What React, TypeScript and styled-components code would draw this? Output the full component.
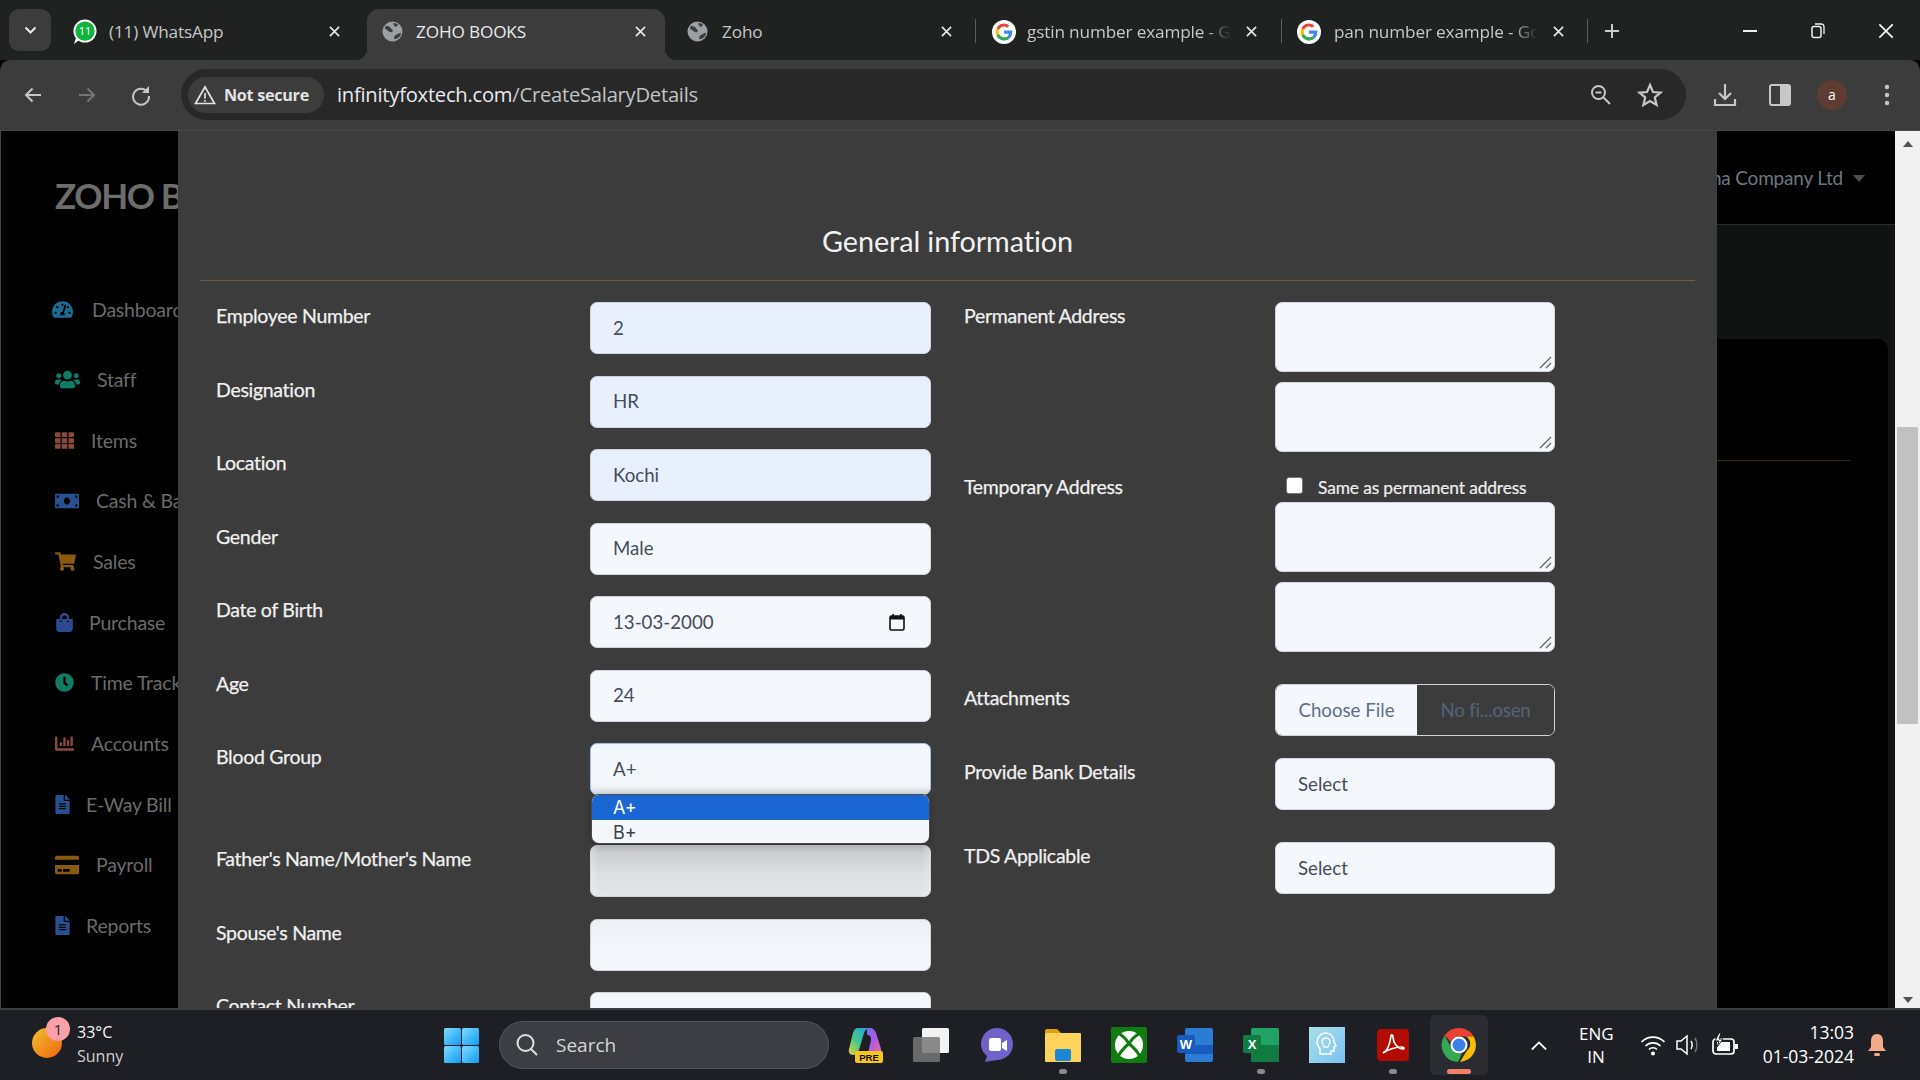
import React from 'react';
import styled, { createGlobalStyle } from 'styled-components';
import {
  FaTachometerAlt, FaUsers, FaTh, FaMoneyBill, FaShoppingCart, FaShoppingBag, FaClock,
  FaChartBar, FaFileAlt, FaCreditCard,
} from 'react-icons/fa';

const Global = createGlobalStyle`
  html, body { margin: 0; padding: 0; width: 1920px; height: 1080px; overflow: hidden; background: #000; }
  * { box-sizing: border-box; }
`;

const Screen = styled.div`
  width: 1920px; height: 1080px; display: flex; flex-direction: column;
  font-family: Lato, "Liberation Sans", sans-serif; overflow: hidden;
`;

/* ---------- tab strip ---------- */
const TabStrip = styled.div`
  height: 60px; background: #202222; display: flex; align-items: flex-end; padding-left: 9px; flex: none;
  font-family: "Open Sans", "Noto Sans", sans-serif;
`;
const TabMenu = styled.div`
  width: 42px; height: 42px; margin-bottom: 9px; border-radius: 10px; background: #3c3c3c;
  display: flex; align-items: center; justify-content: center; flex: none;
`;
const Tab = styled.div<{ $w: number; $pl: number; $active?: boolean }>`
  width: ${p => p.$w}px; height: 51px; display: flex; align-items: center; flex: none; position: relative;
  padding: 0 0 6px ${p => p.$pl}px; color: ${p => (p.$active ? '#e8eaed' : '#c4c7c5')};
  background: ${p => (p.$active ? '#3c3c3c' : 'transparent')};
  border-radius: ${p => (p.$active ? '12px 12px 0 0' : '0')};
  ${p => p.$active ? `
    &::before, &::after { content: ''; position: absolute; bottom: 0; width: 12px; height: 12px; }
    &::before { left: -12px; background: radial-gradient(circle at 0 0, transparent 12px, #3c3c3c 12.5px); }
    &::after { right: -12px; background: radial-gradient(circle at 100% 0, transparent 12px, #3c3c3c 12.5px); }
  ` : ''}
`;
const TabTitle = styled.span<{ $ml?: number; $fade?: boolean }>`
  font-size: 17.2px; margin-left: ${p => p.$ml ?? 12}px; white-space: nowrap; overflow: hidden; flex: 1; letter-spacing: -0.15px;
  ${p => p.$fade ? 'margin-right: 7px; -webkit-mask-image: linear-gradient(to right, #000 88%, transparent 100%);' : ''}
`;
const TabClose = styled.span<{ $mr: number }>`
  width: 26px; height: 26px; display: flex; align-items: center; justify-content: center; flex: none;
  margin-right: ${p => p.$mr}px;
`;
const TabSep = styled.span`
  width: 1px; height: 24px; background: #5c5e5e; flex: none; margin-bottom: 17px;
`;
const NewTab = styled.span`
  margin: 0 0 21px 16px; display: flex; flex: none;
`;
const WinBtns = styled.div`
  margin-left: auto; display: flex; height: 50px; align-self: flex-start; align-items: center; margin-top: 6px;
`;
const WinBtn = styled.span`
  width: 68px; height: 50px; display: flex; align-items: center; justify-content: center;
`;
const FaviconG = styled.svg`
  background: #fff; border-radius: 50%; padding: 3px; flex: none;
`;
const FaviconFlat = styled.svg`
  flex: none;
`;

/* ---------- toolbar ---------- */
const Toolbar = styled.div`
  height: 71px; flex: none; background: #3c3c3c; border-radius: 10px 10px 0 0; display: flex; align-items: center;
  padding: 0 0 1px 15px; border-bottom: 1px solid #484848;
`;
const NavIcon = styled.span<{ $ml?: number }>`
  width: 36px; height: 36px; display: flex; align-items: center; justify-content: center; flex: none;
  margin-left: ${p => p.$ml ?? 0}px;
`;
const Omnibox = styled.div`
  margin-left: 22px; width: 1505px; height: 51px; border-radius: 26px; background: #282828; display: flex; align-items: center;
  padding: 0 23px 0 7px; flex: none; font-family: "Open Sans", "Noto Sans", sans-serif;
`;
const Security = styled.div`
  height: 36px; width: 136px; border-radius: 18px; background: #3c3c3c; display: flex; align-items: center; gap: 8px;
  padding-left: 6px; color: #e3e3e3; font-size: 16.2px; font-weight: 700; white-space: nowrap; letter-spacing: -0.3px; flex: none;
`;
const Url = styled.div`
  margin-left: 13px; font-size: 20.2px; color: #e8eaed; white-space: nowrap; letter-spacing: -0.25px; flex: 1; padding-bottom: 2px;
`;
const UrlDim = styled.span`
  color: #c0c2c4;
`;
const Avatar = styled.span`
  width: 30px; height: 30px; border-radius: 50%; background: #5f3c32; color: #fff; font-size: 14px; display: flex;
  align-items: center; justify-content: center; font-family: "Open Sans", sans-serif;
`;
const OmniEnd = styled.div`
  display: flex; align-items: center; gap: 24px; flex: none;
`;

/* ---------- page ---------- */
const PageArea = styled.div`
  flex: 1; display: flex; position: relative; min-height: 0; border-left: 1px solid #444; background: #000;
`;
const Sidebar = styled.div`
  width: 260px; flex: none; background: #000; padding-left: 54px;
`;
const Logo = styled.div`
  margin-top: 44px; font-size: 35px; font-weight: 700; color: #6d6d6d; letter-spacing: -1.4px; white-space: nowrap; line-height: 40px;
`;
const NavList = styled.div`
  margin-top: 64px; display: flex; flex-direction: column;
`;
const NavItem = styled.div<{ $c: string; $gap: number; $ml?: number; $first?: boolean }>`
  height: 60.7px; display: flex; align-items: center; color: #6a6a6a; font-size: 19.5px; white-space: nowrap;
  gap: ${p => p.$gap}px; margin-left: ${p => p.$ml ?? 0}px; letter-spacing: -0.2px;
  margin-bottom: ${p => (p.$first ? '9.3px' : '0')};
  svg { color: ${p => p.$c}; flex: none; }
`;
const NavFile = styled(FaFileAlt)`
  width: 15px; height: 19px;
`;
const Main = styled.div`
  flex: 1; display: flex; flex-direction: column; background: #111212; min-width: 0;
`;
const TopBar = styled.div`
  height: 94px; background: #000; flex: none; border-bottom: 1px solid #2b2b2b; display: flex; align-items: center;
  justify-content: flex-end; padding-right: 30px; color: #6d7780; font-size: 19px; gap: 10px; padding-bottom: 1px; letter-spacing: -0.2px;
`;
const Caret = styled.span`
  width: 0; height: 0; border-left: 6px solid transparent; border-right: 6px solid transparent; border-top: 7px solid #4e4e4e; margin-top: 2px;
`;
const BackCard = styled.div`
  margin: 114px 7px 0 0; flex: 1; background: #000; border-radius: 10px 10px 0 0; position: relative;
`;
const BackRule = styled.div`
  position: absolute; right: 38px; top: 121px; width: 400px; height: 1px; background: #33291b;
`;
const Scrollbar = styled.div`
  width: 25px; flex: none; background: #f1f1f1; display: flex; flex-direction: column; align-items: center; padding-top: 10px; position: relative;
`;
const ScrollThumb = styled.div`
  width: 21px; height: 297px; background: #c1c1c1; margin-top: 280px; flex: none;
`;
const ArrowUp = styled.span`
  width: 0; height: 0; border-left: 5.5px solid transparent; border-right: 5.5px solid transparent; border-bottom: 6px solid #505050; flex: none;
`;
const ArrowDown = styled.span`
  position: absolute; bottom: 5px; width: 0; height: 0; border-left: 5.5px solid transparent; border-right: 5.5px solid transparent; border-top: 6px solid #505050;
`;

/* ---------- modal ---------- */
const Modal = styled.div`
  position: absolute; left: 177px; top: 0; bottom: 0; width: 1539px; background: #3c3c3c; overflow: hidden; padding: 0 22px;
`;
const ModalTitle = styled.h2`
  margin: 0; height: 150px; padding-top: 90px; text-align: center; color: #f1f1f1; font-size: 28.8px; font-weight: 400; line-height: 40px; letter-spacing: -0.1px;
  border-bottom: 1px solid #6f5b3a;
`;
const Columns = styled.div`
  display: flex; padding-top: 21px;
`;
const LeftCol = styled.div`
  width: 761px; flex: none; padding-left: 16px; display: flex; flex-direction: column;
`;
const RightCol = styled.div`
  flex: 1; padding-left: 3px; display: flex; flex-direction: column;
`;
const Row = styled.div<{ $mb?: number }>`
  display: flex; align-items: flex-start; margin-bottom: ${p => p.$mb ?? 21.5}px; position: relative; flex: none;
`;
const Label = styled.div<{ $w: number; $top?: number }>`
  width: ${p => p.$w}px; flex: none; color: #f0f0f0; font-size: 19.5px; font-weight: 400; padding-top: ${p => p.$top ?? 2}px; line-height: 24px;
  letter-spacing: -0.3px; -webkit-text-stroke: 0.25px #f0f0f0; white-space: nowrap;
`;
const Field = styled.div<{ $w?: number; $fill?: string; $focus?: boolean }>`
  width: ${p => p.$w ?? 341}px; height: 52px; border-radius: 7px; background: ${p => p.$fill ?? '#f4f8fd'};
  border: 1px solid ${p => (p.$focus ? '#a6bde8' : '#d0d3da')}; display: flex; align-items: center; justify-content: space-between;
  padding: 0 22px 1px; color: #454c5a; font-size: 18.7px; flex: none;
  ${p => p.$focus ? 'box-shadow: inset 0 -12px 10px -10px rgba(0,0,0,.18);' : ''}
`;
const FieldShaded = styled(Field)`
  background: linear-gradient(#c6c8cb, #dcdee1 55%, #e3e5e8);
  box-shadow: inset 10px 0 10px -8px rgba(255,255,255,.35), inset -10px 0 10px -8px rgba(255,255,255,.35);
`;
const FieldFaint = styled(Field)`
  background: linear-gradient(#eceff3, #f4f8fd 70%);
`;
const CalIcon = styled.svg`
  margin-right: 3px; flex: none;
`;
const SelectWrap = styled.div`
  position: relative; flex: none;
`;
const DropdownPop = styled.div`
  position: absolute; left: 2px; top: 52px; width: 337px; height: 48px; border-radius: 7px; overflow: hidden; z-index: 3;
  background: #f4f8fd; box-shadow: 0 0 0 1px #4b4b4b, 0 2px 8px rgba(0,0,0,.3); font-family: Inter, "Liberation Sans", sans-serif;
`;
const DropOption = styled.div<{ $sel?: boolean }>`
  height: ${p => (p.$sel ? 25 : 23)}px; line-height: 25px; padding-left: 21px; font-size: 18px;
  background: ${p => (p.$sel ? '#1a67d4' : 'transparent')}; color: ${p => (p.$sel ? '#fff' : '#38404e')};
`;
const AreaStack = styled.div`
  display: flex; flex-direction: column; gap: 10px;
`;
const TempBlock = styled.div`
  display: flex; flex-direction: column; padding-top: 20px;
`;
const TextArea = styled.div`
  width: 280px; height: 70px; border-radius: 7px; background: #f4f8fd; border: 1px solid #d0d3da; position: relative; flex: none;
`;
const Grip = styled.svg`
  position: absolute; right: 2px; bottom: 2px;
`;
const CheckRow = styled.div`
  height: 30px; display: flex; align-items: center; padding-left: 11px; color: #eee; font-size: 17.4px; letter-spacing: -0.15px;
  -webkit-text-stroke: 0.2px #eee; white-space: nowrap;
`;
const CheckBox = styled.span`
  width: 17px; height: 17px; background: #fff; border: 1px solid #767676; border-radius: 3px; margin: -3px 15px 0 0; flex: none;
`;
const FileField = styled.div`
  width: 280px; height: 52px; border-radius: 7px; border: 1px solid #d0d3da; display: flex; overflow: hidden; flex: none; font-size: 18.7px;
`;
const FileBtn = styled.div`
  width: 141px; background: #f4f8fd; color: #5f6f88; display: flex; align-items: center; justify-content: center; flex: none;
`;
const FileName = styled.div`
  flex: 1; background: #3c3c3c; color: #55637c; display: flex; align-items: center; justify-content: center; letter-spacing: -0.2px;
`;

/* ---------- taskbar ---------- */
const Taskbar = styled.div`
  height: 72px; flex: none; background: #1e1f24; border-top: 2px solid #3a3b40; display: flex; align-items: center;
  font-family: "Open Sans", "Noto Sans", sans-serif; color: #fff;
`;
const Weather = styled.div`
  width: 444px; padding-left: 32px; display: flex; align-items: center; flex: none; gap: 15px;
`;
const WeatherIcon = styled.div`
  width: 30px; height: 30px; border-radius: 50%; background: linear-gradient(135deg, #f1c02e, #f0640f); position: relative; flex: none; margin-top: -4px;
`;
const WeatherBadge = styled.span`
  position: absolute; top: -11px; left: 14px; width: 24px; height: 24px; border-radius: 50%; background: #f9a0a8; color: #222; font-size: 15px;
  display: flex; align-items: center; justify-content: center;
`;
const WeatherText = styled.div`
  font-size: 16px; line-height: 24px; color: #f4f4f4; margin-top: -2px;
`;
const WeatherSub = styled.div`
  color: #cfcfcf;
`;
const StartIcon = styled.svg`
  flex: none;
`;
const SearchBox = styled.div`
  width: 330px; height: 48px; border-radius: 24px; background: #3d3e44; border: 1px solid #55565b; margin: 0 3px 0 20px; display: flex;
  align-items: center; padding-left: 15px; gap: 17px; font-size: 19px; color: #d6d6d6; flex: none;
`;
const TaskIcons = styled.div`
  display: flex; align-items: center; flex: none;
`;
const TaskIcon = styled.div<{ $active?: boolean }>`
  width: 66px; height: 60px; display: flex; align-items: center; justify-content: center; position: relative; flex: none;
  &::before { content: ''; position: absolute; left: 4px; right: 4px; top: 0; bottom: 0; border-radius: 6px; ${p => p.$active ? 'background: #2b2c32;' : ''} }
  svg { position: relative; }
`;
const Pip = styled.span<{ $c?: string; $w?: number }>`
  position: absolute; bottom: 1px; left: 50%; transform: translateX(-50%); width: ${p => p.$w ?? 8}px; height: 5px; border-radius: 3px; background: ${p => p.$c ?? '#8a8a8e'};
`;
const Tray = styled.div`
  margin-left: 39px; display: flex; align-items: center; flex: none;
`;
const TrayGlyph = styled.svg<{ $ml?: number }>`
  margin-left: ${p => p.$ml ?? 0}px; flex: none;
`;
const Lang = styled.div`
  font-size: 17px; line-height: 23px; text-align: center; margin-left: 32px; width: 34px; flex: none;
`;
const Clock = styled.div`
  font-size: 17.5px; line-height: 24px; text-align: right; margin: -2px 0 0 23px; width: 92px; white-space: nowrap; flex: none;
  display: flex; flex-direction: column; align-items: flex-end;
`;

const G = () => (
  <FaviconG width="24" height="24" viewBox="0 0 48 48">
    <path fill="#EA4335" d="M24 9.5c3.9 0 6.6 1.7 8.2 3.1l6-5.9C34.5 3.3 29.7 1 24 1 15.1 1 7.5 6.1 3.8 13.5l7 5.4C12.6 13.4 17.8 9.5 24 9.5z" />
    <path fill="#4285F4" d="M46.900 24.5c0-1.7-.1-3-.4-4.3H24v8.4h13.1c-.3 2.1-1.7 5.2-4.8 7.3l7 5.4c4.2-3.9 6.6-9.5 6.6-16.8z" />
    <path fill="#FBBC05" d="M10.800 28.7c-.5-1.4-.7-3-.7-4.7s.3-3.2.7-4.7l-7-5.4C2.3 16.9 1.5 20.4 1.5 24s.8 7.1 2.3 10.1z" />
    <path fill="#34A853" d="M24 47c6.2 0 11.4-2 15.300-5.6l-7-5.4c-2 1.4-4.7 2.3-8.300 2.3-6.200 0-11.400-4-13.200-9.600l-7 5.4C7.500 41.900 15.100 47 24 47z" />
  </FaviconG>
);
const Globe = () => (
  <FaviconFlat width="21" height="21" viewBox="0 0 22 22">
    <circle cx="11" cy="11" r="10.5" fill="#9aa0a6" />
    <path d="M4 5c2 1 4 0 5 2s3 2 2 4-4 0-5-1-2-2-3-2zM13 19c-1-3 1-4 3-5s3-2 4-1c-1 4-4 6-7 6zM12 2c2 0 4 1 5 2l-2 2c-2 0-3-2-3-4z" fill="#3c3c3c" />
  </FaviconFlat>
);
const WhatsApp = () => (
  <FaviconFlat width="24" height="26" viewBox="0 0 26 28">
    <circle cx="13" cy="13" r="12.5" fill="#fff" />
    <path d="M1 27l2-6h6z" fill="#fff" />
    <circle cx="13" cy="13" r="10.5" fill="#10b33d" />
    <text x="13" y="17.5" textAnchor="middle" fontSize="12" fontFamily="Open Sans, sans-serif" fill="#fff">11</text>
  </FaviconFlat>
);
const X = ({ size = 11, c = '#e6e6e6', w = 1.8 }: { size?: number; c?: string; w?: number }) => (
  <svg width={size} height={size} viewBox="0 0 12 12"><path d="M1 1l10 10M11 1L1 11" stroke={c} strokeWidth={w} fill="none" /></svg>
);
const Grp = () => (
  <Grip width="13" height="13" viewBox="0 0 13 13"><path d="M1 12L12 1M7 12l5-5" stroke="#666" strokeWidth="1.3" fill="none" /></Grip>
);

const leftRows = [
  { label: 'Employee Number', value: '2', fill: '#e8f0fe' },
  { label: 'Designation', value: 'HR', fill: '#e8f0fe' },
  { label: 'Location', value: 'Kochi', fill: '#e8f0fe' },
  { label: 'Gender', value: 'Male' },
];

export default function App() {
  return (
    <Screen>
      <Global />
      <TabStrip>
        <TabMenu>
          <svg width="13" height="9" viewBox="0 0 13 9"><path d="M1.5 1.5L6.5 6.5l5-5" stroke="#e8eaed" strokeWidth="2" fill="none" /></svg>
        </TabMenu>
        <Tab $w={316} $pl={22}>
          <WhatsApp /><TabTitle>(11) WhatsApp</TabTitle><TabClose $mr={20}><X /></TabClose>
        </Tab>
        <Tab $w={298} $pl={15} $active>
          <Globe /><TabTitle $ml={13}>ZOHO BOOKS</TabTitle><TabClose $mr={12}><X /></TabClose>
        </Tab>
        <Tab $w={310} $pl={22}>
          <Globe /><TabTitle $ml={14}>Zoho</TabTitle><TabClose $mr={16}><X /></TabClose>
        </Tab>
        <TabSep />
        <Tab $w={305} $pl={16}>
          <G /><TabTitle $ml={11} $fade>gstin number example - Google Search</TabTitle><TabClose $mr={17}><X /></TabClose>
        </Tab>
        <TabSep />
        <Tab $w={305} $pl={15}>
          <G /><TabTitle $ml={13} $fade>pan number example - Google Search</TabTitle><TabClose $mr={16}><X /></TabClose>
        </Tab>
        <TabSep />
        <NewTab>
          <svg width="16" height="16" viewBox="0 0 16 16"><path d="M8 1v14M1 8h14" stroke="#c9cbcc" strokeWidth="2" /></svg>
        </NewTab>
        <WinBtns>
          <WinBtn><svg width="14" height="3" viewBox="0 0 14 3"><rect width="14" height="2" fill="#f0f0f0" /></svg></WinBtn>
          <WinBtn>
            <svg width="15" height="16" viewBox="0 0 15 16"><rect x="1" y="3.5" width="9" height="11" rx="2" stroke="#f0f0f0" strokeWidth="1.5" fill="none" /><path d="M4 1h6a3 3 0 013 3v7" stroke="#f0f0f0" strokeWidth="1.3" fill="none" /></svg>
          </WinBtn>
          <WinBtn><X size={16} c="#f5f5f5" w={1.3} /></WinBtn>
        </WinBtns>
      </TabStrip>

      <Toolbar>
        <NavIcon>
          <svg width="20" height="20" viewBox="0 0 20 20"><path d="M18 10H3M9.5 3.5L3 10l6.5 6.5" stroke="#c7c7c7" strokeWidth="2" fill="none" /></svg>
        </NavIcon>
        <NavIcon $ml={18}>
          <svg width="20" height="20" viewBox="0 0 20 20"><path d="M2 10h15M10.5 3.5L17 10l-6.5 6.5" stroke="#747676" strokeWidth="2" fill="none" /></svg>
        </NavIcon>
        <NavIcon $ml={18}>
          <svg width="20" height="22" viewBox="0 0 20 22"><path d="M16.5 8A8 8 0 1018 12" stroke="#c7c7c7" strokeWidth="2" fill="none" /><path d="M18 2v7h-7z" fill="#c7c7c7" /></svg>
        </NavIcon>
        <Omnibox>
          <Security>
            <svg width="22" height="20" viewBox="0 0 22 20"><path d="M11 2L1.5 18.5h19z" stroke="#e3e3e3" strokeWidth="1.7" fill="none" /><path d="M11 8v5.5M11 15v1.8" stroke="#e3e3e3" strokeWidth="1.7" /></svg>
            Not secure
          </Security>
          <Url>infinityfoxtech.com<UrlDim>/CreateSalaryDetails</UrlDim></Url>
          <OmniEnd>
            <svg width="24" height="24" viewBox="0 0 24 24"><circle cx="9.5" cy="9.5" r="6.5" stroke="#c7c7c7" strokeWidth="2" fill="none" /><path d="M14.5 14.5L21 21" stroke="#c7c7c7" strokeWidth="2" /><path d="M6.5 9.5h6" stroke="#c7c7c7" strokeWidth="2" /></svg>
            <svg width="26" height="26" viewBox="0 0 26 26"><path d="M13 3l3 7 7.5.6-5.7 4.9 1.8 7.5L13 19l-6.600 4 1.800-7.500-5.700-4.900L10 10z" stroke="#c7c7c7" strokeWidth="2.2" fill="none" /></svg>
          </OmniEnd>
        </Omnibox>
        <NavIcon $ml={21}>
          <svg width="24" height="26" viewBox="0 0 24 26"><path d="M12 2v15M6 11l6 6 6-6" stroke="#c7c7c7" strokeWidth="2.2" fill="none" /><path d="M2 17v6h20v-6" stroke="#c7c7c7" strokeWidth="2.2" fill="none" /></svg>
        </NavIcon>
        <NavIcon $ml={19}>
          <svg width="22" height="22" viewBox="0 0 22 22"><rect x="1" y="1" width="20" height="20" rx="2" stroke="#c7c7c7" strokeWidth="2" fill="none" /><rect x="11" y="1" width="10" height="20" fill="#c7c7c7" /></svg>
        </NavIcon>
        <NavIcon $ml={16}><Avatar>a</Avatar></NavIcon>
        <NavIcon $ml={19}>
          <svg width="6" height="22" viewBox="0 0 6 22"><circle cx="3" cy="3" r="2.2" fill="#c7c7c7" /><circle cx="3" cy="11" r="2.2" fill="#c7c7c7" /><circle cx="3" cy="19" r="2.2" fill="#c7c7c7" /></svg>
        </NavIcon>
      </Toolbar>

      <PageArea>
        <Sidebar>
          <Logo>ZOHO BOOKS</Logo>
          <NavList>
            <NavItem $c="#1f6a93" $gap={19} $ml={-3} $first><FaTachometerAlt size={21} />Dashboard</NavItem>
            <NavItem $c="#0f7c64" $gap={17}><FaUsers size={25} />Staff</NavItem>
            <NavItem $c="#8a4a3a" $gap={17}><FaTh size={19} />Items</NavItem>
            <NavItem $c="#26508f" $gap={17}><FaMoneyBill size={24} />Cash &amp; Bank</NavItem>
            <NavItem $c="#8a5a10" $gap={17}><FaShoppingCart size={21} />Sales</NavItem>
            <NavItem $c="#2c4a8f" $gap={15}><FaShoppingBag size={19} />Purchase</NavItem>
            <NavItem $c="#0f7c64" $gap={17}><FaClock size={19} />Time Tracking</NavItem>
            <NavItem $c="#8a4a3a" $gap={17}><FaChartBar size={19} />Accounts</NavItem>
            <NavItem $c="#26508f" $gap={16}><NavFile />E-Way Bill</NavItem>
            <NavItem $c="#8a5a10" $gap={17}><FaCreditCard size={24} />Payroll</NavItem>
            <NavItem $c="#26508f" $gap={16}><NavFile />Reports</NavItem>
          </NavList>
        </Sidebar>
        <Main>
          <TopBar>Varsha Company Ltd <Caret /></TopBar>
          <BackCard><BackRule /></BackCard>
        </Main>
        <Scrollbar>
          <ArrowUp />
          <ScrollThumb />
          <ArrowDown />
        </Scrollbar>

        <Modal>
          <ModalTitle>General information</ModalTitle>
          <Columns>
            <LeftCol>
              {leftRows.map(r => (
                <Row key={r.label}>
                  <Label $w={374}>{r.label}</Label>
                  <Field $fill={r.fill}>{r.value}</Field>
                </Row>
              ))}
              <Row>
                <Label $w={374}>Date of Birth</Label>
                <Field>
                  13-03-2000
                  <CalIcon width="16" height="18" viewBox="0 0 16 18"><rect x="1" y="3" width="14" height="14" rx="1.5" stroke="#111" strokeWidth="1.6" fill="none" /><rect x="1" y="3" width="14" height="3.5" fill="#111" /><path d="M4 1v3M12 1v3" stroke="#111" strokeWidth="1.6" /></CalIcon>
                </Field>
              </Row>
              <Row>
                <Label $w={374}>Age</Label>
                <Field>24</Field>
              </Row>
              <Row $mb={50}>
                <Label $w={374}>Blood Group</Label>
                <SelectWrap>
                  <Field $focus>A+</Field>
                  <DropdownPop>
                    <DropOption $sel>A+</DropOption>
                    <DropOption>B+</DropOption>
                  </DropdownPop>
                </SelectWrap>
              </Row>
              <Row $mb={22}>
                <Label $w={374}>Father's Name/Mother's Name</Label>
                <FieldShaded />
              </Row>
              <Row $mb={21}>
                <Label $w={374}>Spouse's Name</Label>
                <FieldFaint />
              </Row>
              <Row>
                <Label $w={374}>Contact Number</Label>
                <Field />
              </Row>
            </LeftCol>
            <RightCol>
              <Row $mb={0}>
                <Label $w={311}>Permanent Address</Label>
                <AreaStack>
                  <TextArea><Grp /></TextArea>
                  <TextArea><Grp /></TextArea>
                </AreaStack>
              </Row>
              <Row $mb={32}>
                <Label $w={311} $top={23}>Temporary Address</Label>
                <TempBlock>
                  <CheckRow><CheckBox />Same as permanent address</CheckRow>
                  <AreaStack>
                    <TextArea><Grp /></TextArea>
                    <TextArea><Grp /></TextArea>
                  </AreaStack>
                </TempBlock>
              </Row>
              <Row $mb={22}>
                <Label $w={311}>Attachments</Label>
                <FileField><FileBtn>Choose File</FileBtn><FileName>No fi...osen</FileName></FileField>
              </Row>
              <Row $mb={32}>
                <Label $w={311}>Provide Bank Details</Label>
                <Field $w={280}>Select</Field>
              </Row>
              <Row>
                <Label $w={311}>TDS Applicable</Label>
                <Field $w={280}>Select</Field>
              </Row>
            </RightCol>
          </Columns>
        </Modal>
      </PageArea>

      <Taskbar>
        <Weather>
          <WeatherIcon><WeatherBadge>1</WeatherBadge></WeatherIcon>
          <WeatherText>33°C<WeatherSub>Sunny</WeatherSub></WeatherText>
        </Weather>
        <StartIcon width="35" height="35" viewBox="0 0 35 35">
          <defs><linearGradient id="win" x1="0" y1="0" x2="1" y2="1"><stop offset="0" stopColor="#7fdcff" /><stop offset="1" stopColor="#0f9bf5" /></linearGradient></defs>
          <rect width="17" height="17" rx="1.5" fill="url(#win)" /><rect x="18" width="17" height="17" rx="1.5" fill="url(#win)" />
          <rect y="18" width="17" height="17" rx="1.5" fill="url(#win)" /><rect x="18" y="18" width="17" height="17" rx="1.5" fill="url(#win)" />
        </StartIcon>
        <SearchBox>
          <svg width="24" height="26" viewBox="0 0 24 26"><circle cx="10.5" cy="11" r="8" stroke="#e0e0e0" strokeWidth="2" fill="none" /><path d="M16 17l6 6" stroke="#e0e0e0" strokeWidth="2" /></svg>
          Search
        </SearchBox>
        <TaskIcons>
          <TaskIcon>
            <svg width="36" height="36" viewBox="0 0 36 36">
              <defs>
                <linearGradient id="copL" x1="1" y1="0" x2="0" y2="1"><stop offset="0" stopColor="#1f9fe8" /><stop offset=".55" stopColor="#43c78a" /><stop offset="1" stopColor="#e8d23a" /></linearGradient>
                <linearGradient id="copR" x1="0" y1="0" x2="1" y2="1"><stop offset="0" stopColor="#5a7ae8" /><stop offset=".5" stopColor="#a85ae8" /><stop offset="1" stopColor="#f06aa8" /></linearGradient>
              </defs>
              <path d="M20 1h3c3 0 5 2 6 5l5 16c1 3-1 6-4 6H15c4 0 6-2 7-6l2-9c.5-3-1-5-4-5z" fill="url(#copR)" />
              <path d="M11 1h12c-3 0-5 2-6 5l-5 17c-1 3-3 5-6 5-3 0-5-3-4-6L6 6c1-3 2-5 5-5z" fill="url(#copL)" />
              <rect x="8" y="24" width="28" height="12" rx="2" fill="#f7c51c" />
              <text x="22" y="33.5" textAnchor="middle" fontSize="9.5" fontWeight="700" fill="#111" fontFamily="Liberation Sans, sans-serif">PRE</text>
            </svg>
          </TaskIcon>
          <TaskIcon>
            <svg width="36" height="36" viewBox="0 0 36 36"><rect x="9" y="1" width="27" height="25" rx="1.5" fill="#f2f2f2" /><rect y="10" width="27" height="25" rx="1.5" fill="#777" fillOpacity=".85" /></svg>
          </TaskIcon>
          <TaskIcon>
            <svg width="34" height="36" viewBox="0 0 34 36"><path d="M17 1c9 0 16 7 16 16s-7 16-16 16l-12 2 2-6C3 26 1 22 1 17 1 8 8 1 17 1z" fill="#6f62c8" /><rect x="9" y="11" width="12" height="13" rx="2" fill="#fff" /><path d="M22 16l5-3v11l-5-3z" fill="#fff" /></svg>
          </TaskIcon>
          <TaskIcon>
            <svg width="36" height="34" viewBox="0 0 36 34"><path d="M0 3a2 2 0 012-2h10l4 4H0z" fill="#dea10b" /><rect y="5" width="36" height="29" rx="1" fill="#fdd35c" /><rect x="10" y="21" width="16" height="12" rx="2" fill="#1b87d6" /></svg>
            <Pip />
          </TaskIcon>
          <TaskIcon>
            <svg width="36" height="36" viewBox="0 0 36 36"><rect width="36" height="36" rx="2" fill="#107c10" /><circle cx="18" cy="18" r="14" fill="#fff" /><path d="M8 6.500c5 3 8 7 10 10 2-3 5-7 10-10M7 30c2-5 7-10 11-13.500C22 20 27 25 29 30" stroke="#107c10" strokeWidth="3" fill="none" /></svg>
          </TaskIcon>
          <TaskIcon>
            <svg width="36" height="34" viewBox="0 0 36 34"><rect x="8" width="28" height="34" rx="2" fill="#2b7cd3" /><rect x="8" y="17" width="28" height="9" fill="#185abd" /><rect y="7" width="18" height="18" rx="2" fill="#185abd" /><text x="9" y="21" textAnchor="middle" fontSize="13" fontWeight="700" fill="#fff" fontFamily="Liberation Sans, sans-serif">W</text></svg>
          </TaskIcon>
          <TaskIcon>
            <svg width="36" height="34" viewBox="0 0 36 34"><rect x="8" width="28" height="34" rx="2" fill="#21a366" /><rect x="8" y="17" width="28" height="17" fill="#107c41" /><rect y="7" width="18" height="18" rx="2" fill="#107c41" /><text x="9" y="21" textAnchor="middle" fontSize="13" fontWeight="700" fill="#fff" fontFamily="Liberation Sans, sans-serif">X</text></svg>
            <Pip />
          </TaskIcon>
          <TaskIcon>
            <svg width="36" height="36" viewBox="0 0 36 36">
              <defs><linearGradient id="face" x1="0" y1="0" x2="1" y2="1"><stop offset="0" stopColor="#a8e0e8" /><stop offset="1" stopColor="#7cc0f0" /></linearGradient></defs>
              <rect width="36" height="36" fill="url(#face)" />
              <path d="M17 6c-5 0-9 4-9 9 0 3 2 5 3 7v5h11v-3h3v-4l2-1-2-4c0-5-3-9-8-9z" stroke="#fff" strokeWidth="1.5" fill="none" />
              <path d="M17 11c-3 0-4 2-4 4s2 3 2 5h4c0-2 2-3 2-5s-1-4-4-4z" stroke="#fff" strokeWidth="1.3" fill="none" />
            </svg>
          </TaskIcon>
          <TaskIcon>
            <svg width="32" height="32" viewBox="0 0 32 32"><rect width="32" height="32" rx="4" fill="#b30b00" /><path d="M6 24c4-2 7-9 8-17 .5-2 2-1 2 1 0 6 5 12 10 12 1.500 0 1.500-2-1-2-5 0-14 2-19 6z" stroke="#fff" strokeWidth="1.7" fill="none" /></svg>
            <Pip />
          </TaskIcon>
          <TaskIcon $active>
            <svg width="36" height="36" viewBox="0 0 36 36">
              <path d="M18 1a17 17 0 0114.7 8.500H18a8.500 8.500 0 00-8 5.500L3.600 8.500A17 17 0 0118 1z" fill="#ea4335" />
              <path d="M32.7 9.500A17 17 0 0119 35l7-11.500a8.500 8.500 0 00-1-14z" fill="#fbbc05" />
              <path d="M3.600 8.500L11 22a8.500 8.500 0 0010 4.500L17 35A17 17 0 013.600 8.500z" fill="#34a853" />
              <circle cx="18" cy="18" r="8.5" fill="#fff" /><circle cx="18" cy="18" r="6.5" fill="#3b82e8" />
            </svg>
            <Pip $c="#f4806a" $w={24} />
          </TaskIcon>
        </TaskIcons>
        <Tray>
          <TrayGlyph width="16" height="11" viewBox="0 0 18 12"><path d="M1 10.500l8-8 8 8" stroke="#fff" strokeWidth="2" fill="none" /></TrayGlyph>
          <Lang>ENG<br />IN</Lang>
          <TrayGlyph $ml={27} width="26" height="22" viewBox="0 0 26 22"><path d="M1.500 8a16 16 0 0123 0M5.500 12a10.500 10.500 0 0115 0M9 15.500a5.500 5.500 0 018 0" stroke="#fff" strokeWidth="1.7" fill="none" /><circle cx="13" cy="19.5" r="2" fill="#fff" /></TrayGlyph>
          <TrayGlyph $ml={9} width="26" height="24" viewBox="0 0 26 24"><path d="M2 8h4l6-5v18l-6-5H2z" stroke="#fff" strokeWidth="1.5" fill="none" /><path d="M16 8c1.500 2 1.500 6 0 8" stroke="#fff" strokeWidth="1.5" fill="none" /><path d="M20 5c2.500 4 2.500 10 0 14" stroke="#777" strokeWidth="1.5" fill="none" /></TrayGlyph>
          <TrayGlyph $ml={10} width="28" height="24" viewBox="0 0 28 24"><rect x="2" y="6" width="21" height="15" rx="3" stroke="#fff" strokeWidth="1.7" fill="none" /><rect x="6" y="9" width="13" height="9" fill="#fff" /><rect x="24" y="11" width="3" height="5" fill="#fff" /><path d="M8 0L4 8h4l-2 6 6-8H8l2-6z" fill="#fff" stroke="#1e1f24" /></TrayGlyph>
          <Clock><span>13:03</span><span>01-03-2024</span></Clock>
          <TrayGlyph $ml={12} width="22" height="26" viewBox="0 0 22 26"><path d="M11 2c4 0 6 3 6 7v6l3 4H2l3-4V9c0-4 2-7 6-7z" fill="#f4a98a" /><rect x="8" y="21" width="6" height="3" rx="1.5" fill="#f4a98a" /></TrayGlyph>
        </Tray>
      </Taskbar>
    </Screen>
  );
}
